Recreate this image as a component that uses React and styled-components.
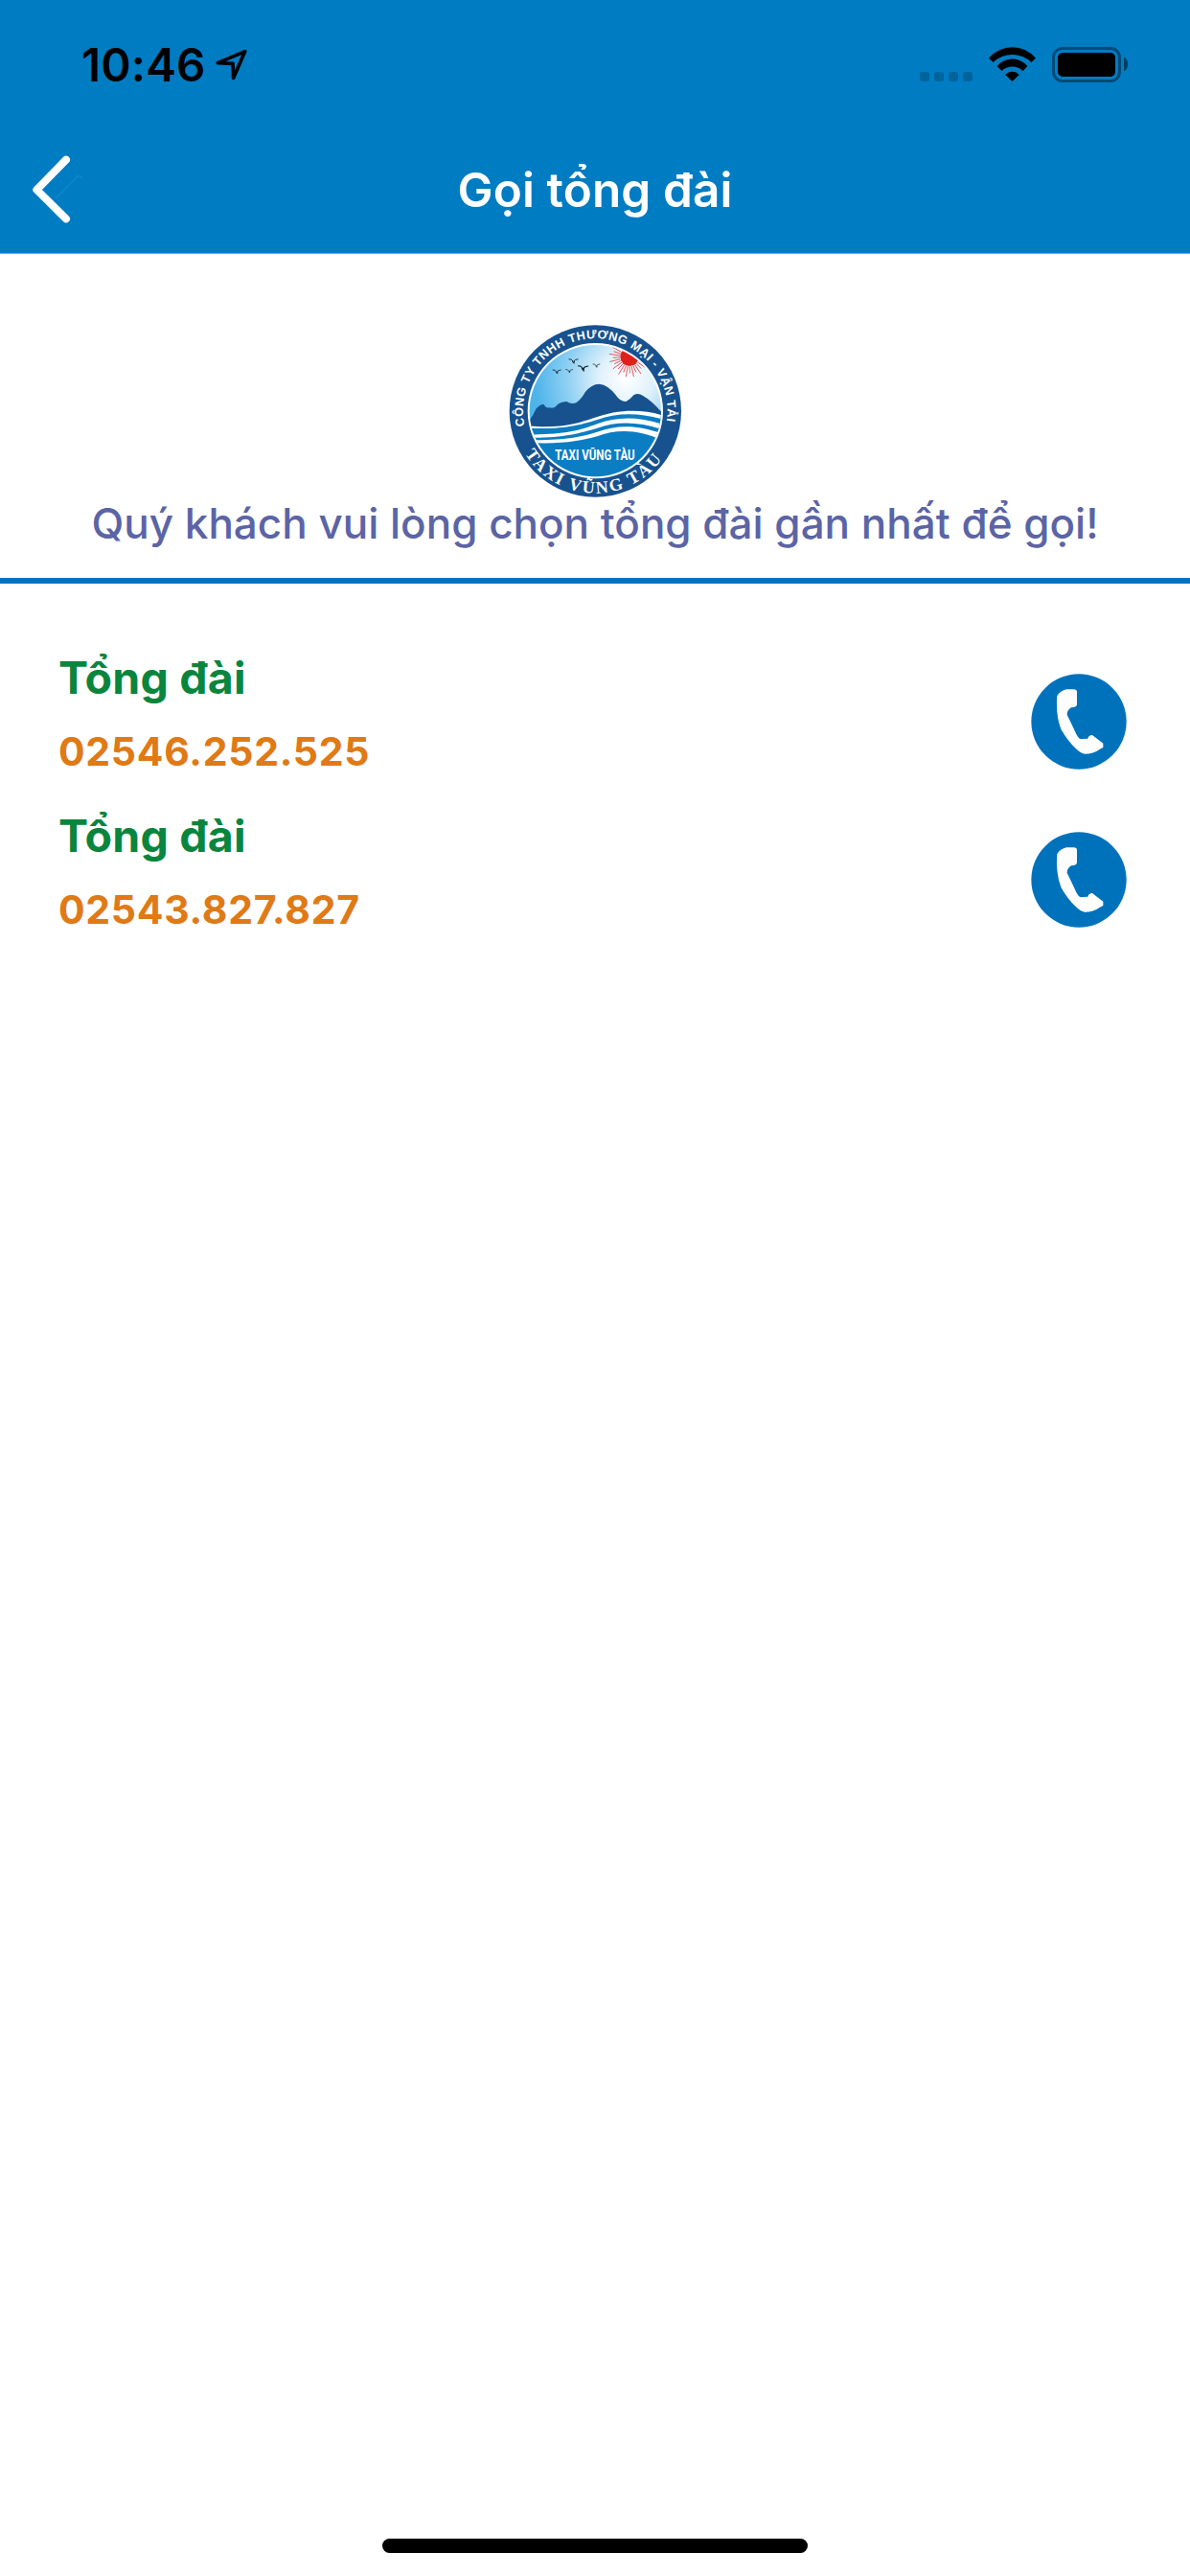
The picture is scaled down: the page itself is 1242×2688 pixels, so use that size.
import React from 'react';
import styled, { createGlobalStyle } from 'styled-components';

const GlobalStyle = createGlobalStyle`
  body {
    margin: 0;
    background: #fff;
  }
`;

const Screen = styled.div`
  display: flex;
  flex-direction: column;
  width: 1242px;
  height: 2688px;
  background: #fff;
  font-family: Inter, 'Liberation Sans', sans-serif;
  white-space: nowrap;
`;

const Header = styled.header`
  height: 264px;
  background: #007cc3;
  border-bottom: 1px solid #8fa0ab;
`;

const StatusBar = styled.div`
  display: flex;
  justify-content: space-between;
  height: 132px;
  padding: 0 65px 0 85px;
  box-sizing: border-box;
`;

const StatusLeft = styled.div`
  display: flex;
  align-items: flex-start;
  gap: 12px;
  padding-top: 38px;

  svg {
    margin-top: 13px;
  }
`;

const Time = styled.span`
  width: 128px;
  font-size: 47.5px;
  font-weight: 600;
  line-height: 60px;
  letter-spacing: 0.2px;
  color: #000;
`;

const StatusRight = styled.div`
  display: flex;
  align-items: flex-end;
  height: 86px;
`;

const Signal = styled.div`
  display: flex;
  gap: 5px;
  margin: 0 17px 1px 0;

  i {
    width: 10px;
    height: 10px;
    border-radius: 3px;
    background: rgba(0, 0, 0, 0.2);
  }
`;

const Battery = styled.div`
  width: 72px;
  height: 37px;
  box-sizing: border-box;
  padding: 3px;
  border: 3px solid rgba(0, 0, 0, 0.4);
  border-radius: 11px;
  margin-left: 17px;

  div {
    height: 25px;
    border-radius: 5px;
    background: #000;
  }
`;

const BatteryCap = styled.div`
  width: 4px;
  height: 14px;
  margin: 0 0 12px 3px;
  border-radius: 0 4px 4px 0 / 0 7px 7px 0;
  background: rgba(0, 0, 0, 0.5);
`;

const NavBar = styled.div`
  display: grid;
  grid-template-columns: 120px 1fr 120px;
  align-items: center;
  height: 132px;
`;

const BackButton = styled.button`
  display: flex;
  padding: 0 0 0 30px;
  border: 0;
  background: none;
`;

const Title = styled.h1`
  margin: 0;
  font-size: 49.5px;
  font-weight: 600;
  line-height: 132px;
  letter-spacing: 0.1px;
  text-align: center;
  color: #fff;
`;

const Intro = styled.section`
  display: flex;
  flex-direction: column;
  align-items: center;
  padding: 74px 0 30px;
  border-bottom: 6px solid #0074c0;

  svg {
    display: block;
  }
`;

const Message = styled.p`
  margin: 0;
  font-size: 44px;
  font-weight: 500;
  line-height: 54px;
  color: #5b64a5;
`;

const List = styled.ul`
  flex: 1;
  margin: 0;
  padding: 61px 66px 0 61px;
  list-style: none;
`;

const Row = styled.li`
  display: flex;
  justify-content: space-between;
  align-items: center;
  height: 165px;
`;

const Info = styled.div`
  padding-bottom: 19px;
`;

const Name = styled.div`
  font-size: 46.5px;
  font-weight: 700;
  line-height: 60px;
  letter-spacing: 0.2px;
  color: #0a853e;
`;

const Phone = styled.div`
  margin-top: 22px;
  font-size: 41px;
  font-weight: 700;
  line-height: 50px;
  letter-spacing: 0.7px;
  color: #df7a16;
`;

const CallButton = styled.button`
  display: flex;
  padding: 0;
  border: 0;
  background: none;
`;

const HomeBar = styled.div`
  width: 444px;
  height: 15px;
  margin: 0 auto 24px;
  border-radius: 8px;
  background: #000;
`;

const numbers = [
  { name: 'Tổng đài', phone: '02546.252.525' },
  { name: 'Tổng đài', phone: '02543.827.827' },
];

const rays = Array.from({ length: 21 }, (_, i) => ({
  angle: -10 + i * 11,
  end: i % 2 ? 52 : 64,
}));

const birds = [
  { x: 183, y: 173, s: 1 },
  { x: 235, y: 140, s: 1.1 },
  { x: 222, y: 171, s: 0.85 },
  { x: 265, y: 162, s: 1.25 },
  { x: 307, y: 154, s: 0.85 },
];

function LocationIcon() {
  return (
    <svg width="34" height="34" viewBox="673 153 102 102">
      <path
        d="M765 161L680 197L727 199L729 244Z"
        fill="none"
        stroke="#000"
        strokeWidth="11"
        strokeLinejoin="round"
      />
    </svg>
  );
}

function WifiIcon() {
  return (
    <svg width="49" height="37" viewBox="396 147 147 111">
      <path d="M396 182A96.4 96.4 0 0 1 543 182L529 195A85.8 85.8 0 0 0 410 195Z" />
      <path d="M422 207A62 62 0 0 1 517 207L503 222A48 48 0 0 0 436 222Z" />
      <path d="M448 234A28 28 0 0 1 491 234L469.500 255Z" />
    </svg>
  );
}

function BackIcon() {
  return (
    <svg width="60" height="72" viewBox="90 487 180 216">
      <path
        d="M175 622L235 560Q247 545 257 558"
        fill="none"
        stroke="#fff"
        strokeOpacity="0.06"
        strokeWidth="6"
      />
      <path
        d="M207 501L115 595L207 686"
        fill="none"
        stroke="#fff"
        strokeWidth="24"
        strokeLinecap="round"
        strokeLinejoin="round"
      />
    </svg>
  );
}

function CallIcon() {
  return (
    <svg width="100" height="100" viewBox="77 67 300 300">
      <circle cx="227" cy="217" r="149" fill="#0072bc" />
      <path
        d="M188 116H211Q221 116 221 124V164Q220 173 203 173Q190 181 190 195L213 243Q224 270 233 272L255 270Q258 259 269 259L303 285V298L293 303Q273 318 245 318Q232 316 218 302Q190 275 171 240Q154 195 159 137Q166 122 188 116Z"
        fill="#fff"
      />
    </svg>
  );
}

function Logo() {
  return (
    <svg width="180" height="180" viewBox="33 27 540 540">
      <defs>
        <radialGradient id="sky" gradientUnits="userSpaceOnUse" cx="400" cy="195" r="285">
          <stop offset="0" stopColor="#fff" />
          <stop offset="0.3" stopColor="#dff1fb" />
          <stop offset="0.65" stopColor="#8fd0f3" />
          <stop offset="1" stopColor="#4db4ea" />
        </radialGradient>
        <clipPath id="scene">
          <circle cx="304" cy="296" r="206" />
        </clipPath>
        <path id="topArc" d="M83 343A226 226 0 1 1 525 343" />
        <path id="bottomArc" d="M83.900 430.600A258 258 0 0 0 516.200 442.900" />
      </defs>
      <circle cx="304" cy="297" r="269" fill="#17528f" />
      <circle cx="304" cy="296" r="212" fill="#fff" />
      <g clipPath="url(#scene)">
        <rect x="90" y="80" width="430" height="430" fill="url(#sky)" />
        <g stroke="#dc2f38" strokeWidth="2.200">
          {rays.map((r) => (
            <line
              key={r.angle}
              x1="30"
              x2={r.end}
              y1="0"
              y2="0"
              transform={`translate(411 127) rotate(${r.angle})`}
            />
          ))}
        </g>
        <circle cx="411" cy="127" r="29" fill="#e0201b" />
        <path
          d="M90 335Q108 315 118 290Q132 274 143 276Q148 288 160 286Q172 290 180 283Q190 268 214 267Q228 276 244 271Q262 258 272 238Q292 212 316 212Q345 215 368 247Q382 268 400 267Q412 262 424 247Q438 239 452 248Q484 266 515 305V360H90Z"
          fill="#17528f"
        />
        <path
          d="M90 343C200 352 250 335 300 318C370 292 450 288 520 312V520H90Z"
          fill="#fff"
        />
        <g fill="#0b7dc3">
          <path d="M90 350C200 356 260 340 310 324C370 302 440 300 520 324V340C440 312 370 314 310 337C255 358 200 372 90 370Z" />
          <path d="M90 380C200 382 255 366 310 350C370 328 440 328 518 356V370C440 338 370 340 310 362C255 380 200 388 90 388Z" />
          <path d="M90 396C200 402 255 390 310 376C370 353 440 354 512 388V520H90Z" />
        </g>
        <g fill="none" stroke="#15232e" strokeWidth="2.500">
          {birds.map((b) => (
            <path
              key={b.x}
              d="M-13 -5Q-5 -7 0 2Q5 -5 14 -5M-3 1L2 7L3 0"
              transform={`translate(${b.x} ${b.y}) scale(${b.s})`}
            />
          ))}
        </g>
      </g>
      <g fill="#fff" fontWeight="700">
        <text fontFamily="'Liberation Sans', sans-serif" fontSize="38">
          <textPath href="#topArc" textLength="790">
            CÔNG TY TNHH THƯƠNG MẠI - VẬN TẢI
          </textPath>
        </text>
        <text fontFamily="'Liberation Serif', serif" fontSize="54">
          <textPath href="#bottomArc" textLength="506">
            TAXI VŨNG TÀU
          </textPath>
        </text>
        <text
          x="178"
          y="449"
          fontFamily="Roboto, sans-serif"
          fontSize="45"
          textLength="250"
          lengthAdjust="spacingAndGlyphs"
        >
          TAXI VŨNG TÀU
        </text>
      </g>
    </svg>
  );
}

function App() {
  return (
    <Screen>
      <GlobalStyle />
      <Header>
        <StatusBar>
          <StatusLeft>
            <Time>10:46</Time>
            <LocationIcon />
          </StatusLeft>
          <StatusRight>
            <Signal>
              <i />
              <i />
              <i />
              <i />
            </Signal>
            <WifiIcon />
            <Battery>
              <div />
            </Battery>
            <BatteryCap />
          </StatusRight>
        </StatusBar>
        <NavBar>
          <BackButton type="button">
            <BackIcon />
          </BackButton>
          <Title>Gọi tổng đài</Title>
        </NavBar>
      </Header>
      <Intro>
        <Logo />
        <Message>Quý khách vui lòng chọn tổng đài gần nhất để gọi!</Message>
      </Intro>
      <List>
        {numbers.map((n) => (
          <Row key={n.phone}>
            <Info>
              <Name>{n.name}</Name>
              <Phone>{n.phone}</Phone>
            </Info>
            <CallButton type="button">
              <CallIcon />
            </CallButton>
          </Row>
        ))}
      </List>
      <HomeBar />
    </Screen>
  );
}

export default App;
